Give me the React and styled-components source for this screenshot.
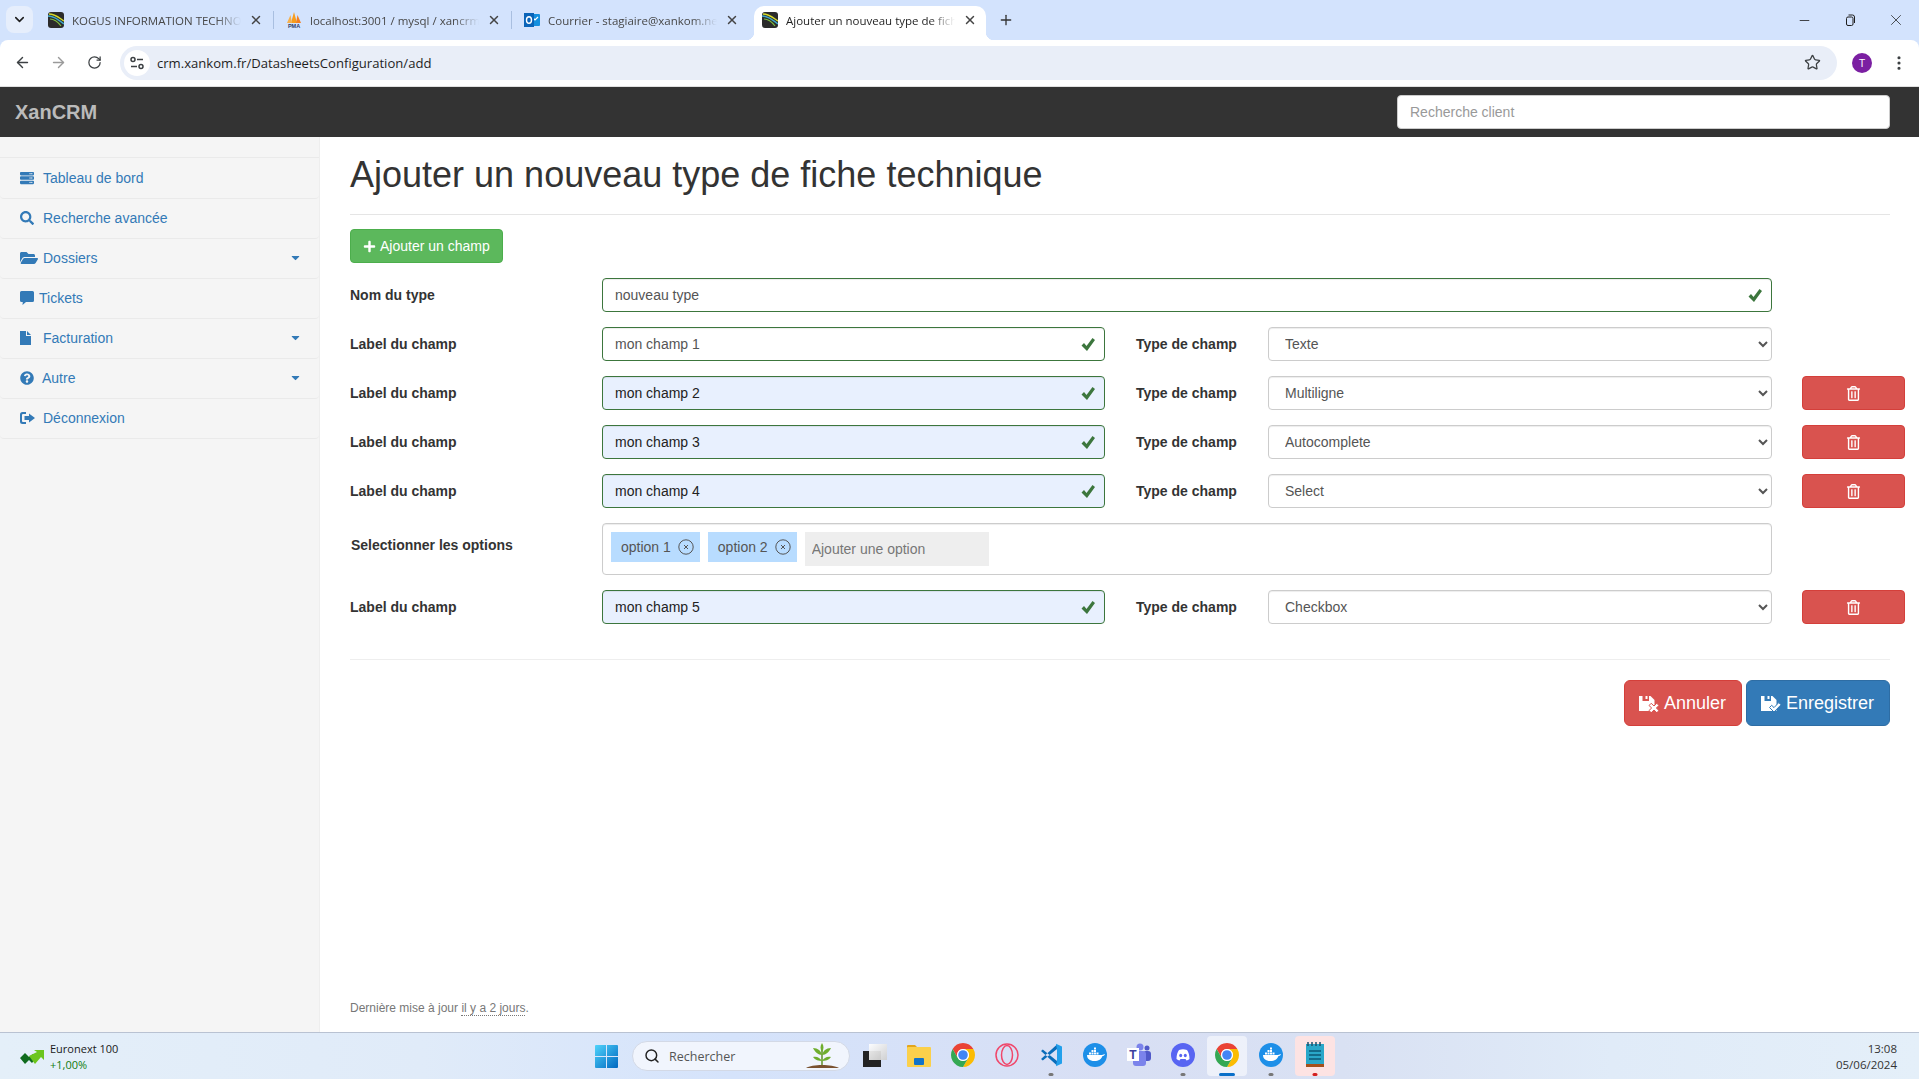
import React from 'react';
import styled, { createGlobalStyle } from 'styled-components';
import { ArrowLeft, ArrowRight, RotateCw, Star, EllipsisVertical, X, Plus, ChevronDown, Minus, Search } from 'lucide-react';
import { FaServer, FaSearch, FaFolderOpen, FaQuestionCircle, FaPlus, FaRegTrashAlt, FaCaretDown } from 'react-icons/fa';

const GlobalStyle = createGlobalStyle`
	html, body {
		margin: 0;
		height: 100%;
		overflow: hidden;
		background: #fff;
	}
	body {
		font-family: "Liberation Sans", Arial, sans-serif;
		font-size: 14px;
		color: #333;
	}
	#root {
		height: 100%;
	}
	* {
		box-sizing: border-box;
	}
`;

const UI_FONT = '"Open Sans", "Noto Sans", sans-serif';

const KogusIcon = () => (
	<svg width="16" height="16" viewBox="0 0 16 16">
		<rect width="16" height="16" rx="3" fill="#2b2b2b" />
		<path d="M0 4c5 0 9 3 16 8" stroke="#3fa9c9" strokeWidth="1.4" fill="none" />
		<path d="M1 2c6 0 9 3 15 7" stroke="#d7dc2a" strokeWidth="1.4" fill="none" />
		<path d="M2 7c5 0 8 3 11 7" stroke="#7fbf3f" strokeWidth="1.2" fill="none" />
	</svg>
);

const PmaIcon = () => (
	<svg width="16" height="16" viewBox="0 0 16 16">
		<path d="M8 0l3 11H5z" fill="#f89c1c" />
		<path d="M4.500 3L6 11H1z" fill="#f7b04a" />
		<path d="M11.500 3L15 11h-5z" fill="#f47f1f" />
		<text x="8" y="16" fontSize="5.500" fontWeight="700" textAnchor="middle" fill="#2b3a67" fontFamily="Liberation Sans">
			PMA
		</text>
	</svg>
);

const OutlookIcon = () => (
	<svg width="16" height="16" viewBox="0 0 16 16">
		<rect x="6" y="2" width="10" height="12" rx="1" fill="#1490df" />
		<path d="M9 6l2 2 3-3" stroke="#fff" strokeWidth="1.200" fill="none" />
		<rect x="0" y="1" width="10" height="14" fill="#0a64b8" />
		<ellipse cx="5" cy="8" rx="2.500" ry="3.300" fill="none" stroke="#fff" strokeWidth="1.400" />
	</svg>
);

const TuneIcon = () => (
	<svg width="16" height="16" viewBox="0 0 16 16" fill="none" stroke="#3c4043" strokeWidth="1.500">
		<circle cx="4" cy="4.500" r="2" />
		<path d="M8 4.500h6M2 11.500h6" />
		<circle cx="12" cy="11.500" r="2" />
	</svg>
);

const RestoreIcon = () => (
	<svg width="12" height="12" viewBox="0 0 12 12" fill="none" stroke="#1f1f1f" strokeWidth="1">
		<rect x="2.500" y="3" width="6.500" height="8.500" rx="1.500" />
		<path d="M4.500 1h4a2 2 0 0 1 2 2v6" />
	</svg>
);

const CheckGlyph = () => (
	<svg width="14" height="13" viewBox="0 0 14 13" fill="#3c763d">
		<path d="M0.500 7.500L3 5l2.500 3L11.500 0 14 2 6 13z" />
	</svg>
);

const FloppyIcon = ({ cancel }) => (
	<svg width="20" height="17" viewBox="0 0 20 17">
		<path d="M0 1h3.500v5h6.500V1h1.500l4 4v11H0z" fill="#fff" />
		<rect x="6.500" y="1" width="2" height="3" fill="#fff" />
		{cancel ? (
			<path
				d="M10 10.500l2.200-2.200 2.800 2.700 2.800-2.700 2.200 2.200-2.700 2.500 2.700 2.500-2.200 2.200-2.800-2.700-2.800 2.700-2.200-2.200 2.700-2.500z"
				fill="#fff"
				stroke="#d9534f"
				strokeWidth="1"
			/>
		) : (
			<path d="M8.500 12.500l2.200-2.200 2.300 2.300 4.800-5 2.200 2.200-7 7.200z" fill="#fff" stroke="#337ab7" strokeWidth="1" />
		)}
	</svg>
);

const SignOutIcon = () => (
	<svg width="15" height="14" viewBox="0 0 15 14" fill="#337ab7">
		<path d="M6 1H2.500A2.500 2.500 0 0 0 0 3.500v7A2.500 2.500 0 0 0 2.500 13H6v-2H3a1 1 0 0 1-1-1V4a1 1 0 0 1 1-1h3z" />
		<path d="M9 2.500L15 7l-6 4.500V9H4.500V5H9z" />
	</svg>
);

const CommentGlyph = () => (
	<svg width="14" height="14" viewBox="0 0 14 14" fill="#337ab7">
		<path d="M1.500 0h11A1.500 1.500 0 0 1 14 1.500v8a1.500 1.500 0 0 1-1.500 1.500H6L2.500 14l.300-3H1.500A1.500 1.500 0 0 1 0 9.500v-8A1.500 1.500 0 0 1 1.500 0z" />
	</svg>
);

const FileGlyph = () => (
	<svg width="11" height="14" viewBox="0 0 11 14" fill="#337ab7">
		<path d="M0 0h6v5h5v9H0zM7 0l4 4H7z" />
	</svg>
);

const TagCloseIcon = () => (
	<svg width="16" height="16" viewBox="0 0 16 16" fill="none" stroke="#555">
		<circle cx="8" cy="8" r="7.200" />
		<path d="M6 6l4 4M10 6l-4 4" />
	</svg>
);

const TrendIcon = () => (
	<svg width="24" height="16" viewBox="0 0 24 16">
		<path d="M0 10l5-5 4 4 4-3 3 4-4 5-3-3-4 4z" fill="#0f6b1e" />
		<path d="M9 8l8-4-3-2h10v10l-3-3-6 7-3-4z" fill="#6cc51d" />
	</svg>
);

const WindowsIcon = () => (
	<svg width="23" height="23" viewBox="0 0 23 23">
		<defs>
			<linearGradient id="win" x1="0" y1="0" x2="1" y2="1">
				<stop offset="0" stopColor="#4fd3fb" />
				<stop offset="1" stopColor="#0067c0" />
			</linearGradient>
		</defs>
		<path d="M0 1a1 1 0 0 1 1-1h10v11H0zM12 0h10a1 1 0 0 1 1 1v10H12zM0 12h11v11H1a1 1 0 0 1-1-1zM12 12h11v10a1 1 0 0 1-1 1H12z" fill="url(#win)" />
	</svg>
);

const PlantIcon = () => (
	<svg width="36" height="26" viewBox="0 0 36 26">
		<path d="M2 25c6-4 26-4 33 0z" fill="#7a5230" />
		<path d="M18 22V7" stroke="#5f8f2a" strokeWidth="1.500" />
		<path d="M18 12C14 12 11 9 9 5c5 0 8 3 9 7zM18 12c4 0 7-3 9-7-5 0-8 3-9 7zM18 9c-2-3-2-6 0-9 2 3 2 6 0 9zM18 18c-3 0-7-1-9-4 4-1 7 1 9 4zM18 18c3 0 7-1 9-4-4-1-7 1-9 4z" fill="#6fae2e" />
	</svg>
);

const TaskViewIcon = () => (
	<svg width="24" height="23" viewBox="0 0 24 23">
		<defs>
			<linearGradient id="tvw" x1="0" y1="0" x2="1" y2="1">
				<stop offset="0" stopColor="#fff" />
				<stop offset="1" stopColor="#cfcfcf" />
			</linearGradient>
		</defs>
		<rect x="0" y="7" width="18" height="16" fill="#232323" />
		<rect x="6" y="0" width="18" height="16" fill="url(#tvw)" opacity="0.93" />
	</svg>
);

const FolderIcon = () => (
	<svg width="24" height="23" viewBox="0 0 24 23">
		<path d="M0 2a1 1 0 0 1 1-1h7l3 3H0z" fill="#e3a51c" />
		<rect y="3" width="24" height="20" rx="1" fill="#fbd04b" />
		<rect x="7" y="14" width="10" height="7" rx="1" fill="#1173c9" />
	</svg>
);

const ChromeIcon = () => (
	<svg width="24" height="24" viewBox="0 0 24 24">
		<path d="M12 0a12 12 0 0 1 10.390 6H12a6 6 0 0 0-5.200 9L1.610 6A12 12 0 0 1 12 0z" fill="#ea4335" />
		<path d="M22.390 6A12 12 0 0 1 12 24l5.200-9A6 6 0 0 0 12 6z" fill="#fbbc04" />
		<path d="M12 24A12 12 0 0 1 1.610 6l5.190 9a6 6 0 0 0 10.400 0z" fill="#34a853" />
		<circle cx="12" cy="12" r="6" fill="#fff" />
		<circle cx="12" cy="12" r="4.800" fill="#4285f4" />
	</svg>
);

const OperaIcon = () => (
	<svg width="24" height="24" viewBox="0 0 24 24" fill="none" stroke="#f0476b">
		<circle cx="12" cy="12" r="11" strokeWidth="1.500" />
		<ellipse cx="12" cy="12" rx="5.500" ry="9.500" strokeWidth="1.500" />
	</svg>
);

const VsCodeIcon = () => (
	<svg width="24" height="24" viewBox="0 0 24 24">
		<path d="M2 8l1.800-1.500L18 18v4.500zM2 16l1.800 1.500L18 6V1.500z" fill="#0a6dba" />
		<path d="M17 .8l6 2.800v16.800l-6 2.800 1-6V7z" fill="#22a0ec" />
	</svg>
);

const DockerIcon = () => (
	<svg width="24" height="24" viewBox="0 0 24 24">
		<circle cx="12" cy="12" r="12" fill="#1d8fe8" />
		<path d="M4 12h15c1 0 2-1 3-1-.500 1.500-1.500 2-2.500 2-1 3-4 5-8 5-5 0-7.500-2.500-7.500-6z" fill="#fff" />
		<path d="M6 9.500h2v2H6zM8.500 9.500h2v2h-2zM11 9.500h2v2h-2zM8.500 7h2v2h-2zM11 7h2v2h-2zM13.500 9.500h2v2h-2zM11 4.500h2v2h-2z" fill="#fff" />
	</svg>
);

const TeamsIcon = () => (
	<svg width="24" height="24" viewBox="0 0 24 24">
		<circle cx="20" cy="5" r="2.500" fill="#5059c9" />
		<circle cx="13" cy="4" r="3.500" fill="#7b83eb" />
		<rect x="16" y="8" width="8" height="10" rx="3" fill="#5059c9" />
		<rect x="6" y="8" width="13" height="15" rx="3" fill="#7b83eb" />
		<rect x="0" y="5" width="12" height="13" fill="#fff" />
		<text x="6" y="16" fontSize="12" fontWeight="700" textAnchor="middle" fill="#3b3f9e" fontFamily="Liberation Sans">
			T
		</text>
	</svg>
);

const DiscordIcon = () => (
	<svg width="24" height="24" viewBox="0 0 24 24">
		<circle cx="12" cy="12" r="12" fill="#5865f2" />
		<path d="M8 7c3-1 5-1 8 0 1.500 2 2.500 5 2.500 9-1 .8-2 1.200-3 1.500L14.500 16h-5l-1 1.500c-1-.300-2-.700-3-1.500 0-4 1-7 2.500-9z" fill="#fff" />
		<ellipse cx="9.700" cy="12.500" rx="1.500" ry="1.700" fill="#5865f2" />
		<ellipse cx="14.300" cy="12.500" rx="1.500" ry="1.700" fill="#5865f2" />
	</svg>
);

const NotesIcon = () => (
	<svg width="20" height="26" viewBox="0 0 20 26">
		<rect x="1" y="2" width="18" height="20" fill="#2aa7c9" />
		<path d="M3 0v4M7 0v4M11 0v4M15 0v4" stroke="#1d4f6b" strokeWidth="1.500" />
		<rect x="4" y="8" width="12" height="2" fill="#136b8a" />
		<rect x="4" y="12" width="12" height="2" fill="#136b8a" />
		<rect x="4" y="16" width="12" height="2" fill="#136b8a" />
		<rect x="1" y="22" width="18" height="3" fill="#a5501c" />
	</svg>
);

const TABS = [
	{ title: 'KOGUS INFORMATION TECHNOLOGY', icon: <KogusIcon />, sep: true },
	{ title: 'localhost:3001 / mysql / xancrm', icon: <PmaIcon />, sep: true },
	{ title: 'Courrier - stagiaire@xankom.net', icon: <OutlookIcon /> },
	{ title: 'Ajouter un nouveau type de fiche technique', icon: <KogusIcon />, active: true },
];

const MENU = [
	{ label: 'Tableau de bord', icon: <FaServer size={14} /> },
	{ label: 'Recherche avancée', icon: <FaSearch size={14} /> },
	{ label: 'Dossiers', icon: <FaFolderOpen size={18} />, caret: true },
	{ label: 'Tickets', icon: <CommentGlyph />, slot: 19 },
	{ label: 'Facturation', icon: <FileGlyph />, caret: true },
	{ label: 'Autre', icon: <FaQuestionCircle size={14} />, caret: true, slot: 22 },
	{ label: 'Déconnexion', icon: <SignOutIcon /> },
];

const TASK_APPS = [
	{ key: 'view', icon: <TaskViewIcon /> },
	{ key: 'files', icon: <FolderIcon /> },
	{ key: 'chrome1', icon: <ChromeIcon /> },
	{ key: 'opera', icon: <OperaIcon /> },
	{ key: 'code', icon: <VsCodeIcon />, mark: 'dot' },
	{ key: 'docker1', icon: <DockerIcon /> },
	{ key: 'teams', icon: <TeamsIcon /> },
	{ key: 'discord', icon: <DiscordIcon />, mark: 'dot' },
	{ key: 'chrome2', icon: <ChromeIcon />, mark: 'bar', tint: 'rgba(255,255,255,.55)' },
	{ key: 'docker2', icon: <DockerIcon />, mark: 'dot' },
	{ key: 'notes', icon: <NotesIcon />, mark: 'red', tint: '#fde3e3' },
];

const FieldInput = ({ value, filled }) => (
	<InputWrap>
		<ValidInput defaultValue={value} $filled={filled} />
		<ValidIcon>
			<CheckGlyph />
		</ValidIcon>
	</InputWrap>
);

const FieldRow = ({ value, filled, type, removable }) => (
	<FormRow>
		<FieldLabel>Label du champ</FieldLabel>
		<FieldInput value={value} filled={filled} />
		<TypeLabel>Type de champ</TypeLabel>
		<TypeSelect defaultValue={type}>
			<option>Texte</option>
			<option>Multiligne</option>
			<option>Autocomplete</option>
			<option>Select</option>
			<option>Checkbox</option>
		</TypeSelect>
		{removable && (
			<DeleteButton>
				<FaRegTrashAlt size={15} />
			</DeleteButton>
		)}
	</FormRow>
);

const App = () => (
	<Page>
		<GlobalStyle />
		<TabStrip>
			<TabSearch>
				<ChevronDown size={15} strokeWidth={2.5} />
			</TabSearch>
			{TABS.map(tab => (
				<Tab key={tab.title} $active={tab.active} $sep={tab.sep}>
					<TabIcon>{tab.icon}</TabIcon>
					<TabTitle $active={tab.active}>{tab.title}</TabTitle>
					<X size={14} strokeWidth={2.5} color="#444" />
				</Tab>
			))}
			<NewTab>
				<Plus size={16} strokeWidth={2} />
			</NewTab>
			<WindowControls>
				<WindowButton>
					<Minus size={15} strokeWidth={1.3} />
				</WindowButton>
				<WindowButton>
					<RestoreIcon />
				</WindowButton>
				<WindowButton>
					<X size={18} strokeWidth={1} />
				</WindowButton>
			</WindowControls>
		</TabStrip>
		<Toolbar>
			<NavButton>
				<ArrowLeft size={17} strokeWidth={2} />
			</NavButton>
			<NavButton $disabled>
				<ArrowRight size={17} strokeWidth={2} />
			</NavButton>
			<NavButton>
				<RotateCw size={15} strokeWidth={2} />
			</NavButton>
			<Omnibox>
				<TuneBadge>
					<TuneIcon />
				</TuneBadge>
				<Url>crm.xankom.fr/DatasheetsConfiguration/add</Url>
				<Star size={17} strokeWidth={1.8} color="#3c4043" />
			</Omnibox>
			<Avatar>T</Avatar>
			<MenuDots>
				<EllipsisVertical size={18} strokeWidth={2.2} color="#3c4043" />
			</MenuDots>
		</Toolbar>
		<Navbar>
			<Brand>XanCRM</Brand>
			<ClientSearch placeholder="Recherche client" />
		</Navbar>
		<Body>
			<Sidebar>
				<MenuList>
					{MENU.map(item => (
						<MenuItem key={item.label}>
							<MenuIcon $slot={item.slot}>{item.icon}</MenuIcon>
							{item.label}
							{item.caret && (
								<Caret>
									<FaCaretDown size={13} />
								</Caret>
							)}
						</MenuItem>
					))}
				</MenuList>
			</Sidebar>
			<Main>
				<Title>Ajouter un nouveau type de fiche technique</Title>
				<AddButton>
					<FaPlus size={13} />
					Ajouter un champ
				</AddButton>
				<FormRow>
					<FieldLabel>Nom du type</FieldLabel>
					<WideField>
						<FieldInput value="nouveau type" />
					</WideField>
				</FormRow>
				<FieldRow value="mon champ 1" type="Texte" />
				<FieldRow value="mon champ 2" type="Multiligne" filled removable />
				<FieldRow value="mon champ 3" type="Autocomplete" filled removable />
				<FieldRow value="mon champ 4" type="Select" filled removable />
				<FormRow>
					<FieldLabel $top>Selectionner les options</FieldLabel>
					<TagBox>
						<Tag>
							option 1
							<TagCloseIcon />
						</Tag>
						<Tag>
							option 2
							<TagCloseIcon />
						</Tag>
						<TagInput placeholder="Ajouter une option" />
					</TagBox>
				</FormRow>
				<FieldRow value="mon champ 5" type="Checkbox" filled removable />
				<Divider />
				<Actions>
					<LargeButton $color="#d9534f" $border="#d43f3a">
						<FloppyIcon cancel />
						Annuler
					</LargeButton>
					<LargeButton $color="#337ab7" $border="#2e6da4">
						<FloppyIcon />
						Enregistrer
					</LargeButton>
				</Actions>
				<Footnote>
					Dernière mise à jour <Ago>il y a 2 jours</Ago>.
				</Footnote>
			</Main>
		</Body>
		<Taskbar>
			<Widget>
				<TrendIcon />
				<WidgetText>
					<span>Euronext 100</span>
					<WidgetValue>+1,00%</WidgetValue>
				</WidgetText>
			</Widget>
			<StartButton>
				<WindowsIcon />
			</StartButton>
			<TaskSearch>
				<Search size={16} strokeWidth={2.2} color="#222" />
				<TaskSearchText>Rechercher</TaskSearchText>
				<PlantIcon />
			</TaskSearch>
			{TASK_APPS.map(app => (
				<TaskApp key={app.key} $tint={app.tint} $mark={app.mark}>
					{app.icon}
				</TaskApp>
			))}
			<Clock>
				<span>13:08</span>
				<span>05/06/2024</span>
			</Clock>
		</Taskbar>
	</Page>
);

const Page = styled.div`
	height: 100%;
	display: flex;
	flex-direction: column;
	background: #d3e3fd;
`;

const TabStrip = styled.div`
	height: 40px;
	flex: none;
	display: flex;
	align-items: flex-end;
	padding-left: 6px;
	background: #d3e3fd;
	font-family: ${UI_FONT};
`;
const TabSearch = styled.div`
	width: 27px;
	height: 27px;
	margin: 0 3px 7px 0;
	display: flex;
	align-items: center;
	justify-content: center;
	border-radius: 8px;
	background: #e6eefc;
	color: #1f1f1f;
`;
const Tab = styled.div`
	position: relative;
	height: 34px;
	display: flex;
	align-items: center;
	padding-bottom: 6px;
	width: ${props => (props.$active ? '232px' : '238px')};
	margin-left: ${props => (props.$active ? '4px' : '0')};
	padding-left: ${props => (props.$active ? '8px' : '12px')};
	padding-right: ${props => (props.$active ? '9px' : '11px')};
	border-radius: 10px 10px 0 0;
	background: ${props => (props.$active ? '#fff' : 'transparent')};

	&::before {
		content: '';
		display: ${props => (props.$sep ? 'block' : 'none')};
		position: absolute;
		right: 0;
		top: 5px;
		width: 1px;
		height: 18px;
		background: #a9bfe0;
	}
	&::after {
		content: '';
		display: ${props => (props.$active ? 'block' : 'none')};
		position: absolute;
		left: -8px;
		right: -8px;
		bottom: 0;
		height: 8px;
		background:
			radial-gradient(circle at 0 0, transparent 8px, #fff 8.5px) left bottom / 8px 8px no-repeat,
			radial-gradient(circle at 100% 0, transparent 8px, #fff 8.5px) right bottom / 8px 8px no-repeat;
	}
`;
const TabIcon = styled.span`
	width: 16px;
	height: 16px;
	flex: none;
	margin-right: 8px;
	display: flex;
`;
const TabTitle = styled.span`
	flex: 1;
	min-width: 0;
	margin-right: 8px;
	overflow: hidden;
	white-space: nowrap;
	font-size: 11.5px;
	color: ${props => (props.$active ? '#1f1f1f' : '#474747')};
	mask-image: linear-gradient(90deg, #000 85%, transparent 100%);
`;
const NewTab = styled.div`
	width: 28px;
	height: 28px;
	margin: 0 0 6px 6px;
	display: flex;
	align-items: center;
	justify-content: center;
	color: #333;
`;
const WindowControls = styled.div`
	margin-left: auto;
	height: 40px;
	display: flex;
	align-items: center;
`;
const WindowButton = styled.div`
	width: 46px;
	display: flex;
	justify-content: center;
	color: #1f1f1f;
`;

const Toolbar = styled.div`
	height: 47px;
	flex: none;
	display: flex;
	align-items: center;
	padding: 0 0 1px 4px;
	background: #fff;
	border-radius: 8px 8px 0 0;
	border-bottom: 1px solid #e0e0e0;
	font-family: ${UI_FONT};
`;
const NavButton = styled.div`
	width: 36px;
	display: flex;
	justify-content: center;
	color: ${props => (props.$disabled ? '#9a9a9a' : '#3c4043')};
`;
const Omnibox = styled.div`
	width: 1717px;
	height: 34px;
	margin-left: 8px;
	display: flex;
	align-items: center;
	padding: 0 16px 0 4px;
	border-radius: 17px;
	background: #e9eef8;
`;
const TuneBadge = styled.div`
	width: 26px;
	height: 26px;
	display: flex;
	align-items: center;
	justify-content: center;
	border-radius: 50%;
	background: #fff;
`;
const Url = styled.div`
	flex: 1;
	margin-left: 7px;
	padding-top: 1px;
	font-size: 13.1px;
	color: #1f1f1f;
`;
const Avatar = styled.div`
	width: 20px;
	height: 20px;
	margin-left: 15px;
	border-radius: 50%;
	background: #7b1fa2;
	color: #fff;
	font-size: 11px;
	line-height: 20px;
	text-align: center;
`;
const MenuDots = styled.div`
	margin-left: 18px;
	display: flex;
`;

const Navbar = styled.div`
	height: 50px;
	flex: none;
	display: flex;
	align-items: center;
	justify-content: space-between;
	padding: 0 29px 0 15px;
	background: #333;
`;
const Brand = styled.div`
	font-size: 20px;
	font-weight: bold;
	color: #bbb;
`;
const ClientSearch = styled.input`
	width: 493px;
	height: 34px;
	padding: 6px 12px;
	border: 1px solid #ccc;
	border-radius: 4px;
	background: #fff;
	font: 14px "Liberation Sans", Arial, sans-serif;
	&::placeholder {
		color: #999;
	}
`;

const Body = styled.div`
	flex: 1;
	min-height: 0;
	display: flex;
	background: #fff;
`;
const Sidebar = styled.div`
	width: 320px;
	flex: none;
	padding-top: 20px;
	background: #f5f5f5;
	border-right: 1px solid #eee;
`;
const MenuList = styled.div`
	padding-top: 1px;
	border-top: 1px solid #eaeaea;
`;
const MenuItem = styled.div`
	height: 40px;
	display: flex;
	align-items: center;
	padding: 0 17px 2px 20px;
	border-bottom: 1px solid #eaeaea;
	border-radius: 0 0 4px 4px;
	color: #337ab7;
`;
const MenuIcon = styled.span`
	width: ${props => props.$slot || 23}px;
	height: 18px;
	flex: none;
	display: flex;
	align-items: center;
`;
const Caret = styled.span`
	margin-left: auto;
	display: flex;
`;

const Main = styled.div`
	flex: 1;
	min-width: 0;
	display: flex;
	flex-direction: column;
	padding: 0 29px 15px 30px;
`;
const Title = styled.h1`
	margin: 0 0 14px;
	height: 78px;
	padding-top: 18px;
	border-bottom: 1px solid #e5e5e5;
	font-size: 36px;
	font-weight: 500;
	line-height: 40px;
	color: #333;
`;
const AddButton = styled.button`
	align-self: flex-start;
	width: 153px;
	height: 34px;
	margin-bottom: 15px;
	padding: 0 12px;
	display: flex;
	align-items: center;
	gap: 4px;
	border: 1px solid #4cae4c;
	border-radius: 4px;
	background: #5cb85c;
	color: #fff;
	font: 14px "Liberation Sans", Arial, sans-serif;
`;
const FormRow = styled.div`
	width: 1555px;
	margin-bottom: 15px;
	display: grid;
	grid-template-columns: 252px 503px 31px 132px 504px 30px 103px;
	align-items: center;
`;
const FieldLabel = styled.label`
	font-weight: bold;
	align-self: ${props => (props.$top ? 'start' : 'center')};
	padding-top: ${props => (props.$top ? '14px' : '0')};
	padding-left: ${props => (props.$top ? '1px' : '0')};
`;
const TypeLabel = styled.label`
	grid-column: 4;
	font-weight: bold;
`;
const WideField = styled.div`
	grid-column: 2 / 6;
`;
const InputWrap = styled.div`
	position: relative;
`;
const ValidInput = styled.input`
	display: block;
	width: 100%;
	height: 34px;
	padding: 6px 34px 6px 12px;
	border: 1px solid #3c763d;
	border-radius: 4px;
	background: ${props => (props.$filled ? '#e8f0fe' : '#fff')};
	color: ${props => (props.$filled ? '#222' : '#555')};
	font: 14px "Liberation Sans", Arial, sans-serif;
	box-shadow: inset 0 1px 1px rgba(0, 0, 0, 0.075);
`;
const ValidIcon = styled.span`
	position: absolute;
	right: 10px;
	top: 11px;
	display: flex;
`;
const TypeSelect = styled.select`
	grid-column: 5;
	height: 34px;
	padding: 6px 12px;
	border: 1px solid #ccc;
	border-radius: 4px;
	background: #fff;
	color: #555;
	font: 14px "Liberation Sans", Arial, sans-serif;
	box-shadow: inset 0 1px 1px rgba(0, 0, 0, 0.075);
`;
const DeleteButton = styled.button`
	grid-column: 7;
	height: 34px;
	display: flex;
	align-items: center;
	justify-content: center;
	border: 1px solid #d43f3a;
	border-radius: 4px;
	background: #d9534f;
	color: #fff;
`;
const TagBox = styled.div`
	grid-column: 2 / 6;
	height: 52px;
	padding: 8px;
	display: flex;
	align-items: flex-start;
	gap: 8px;
	border: 1px solid #ccc;
	border-radius: 4px;
	background: #fff;
	box-shadow: inset 0 1px 1px rgba(0, 0, 0, 0.075);
`;
const Tag = styled.div`
	height: 30px;
	padding: 0 6px 0 10px;
	display: flex;
	align-items: center;
	gap: 7px;
	background: #b8dcff;
	color: #555;
`;
const TagInput = styled.input`
	width: 184px;
	height: 34px;
	padding: 0 7px;
	border: 0;
	background: #eee;
	font: 14px "Liberation Sans", Arial, sans-serif;
	&::placeholder {
		color: #777;
	}
`;
const Divider = styled.div`
	margin-top: 20px;
	border-top: 1px solid #eee;
`;
const Actions = styled.div`
	margin-top: 20px;
	display: flex;
	justify-content: flex-end;
	gap: 4px;
`;
const LargeButton = styled.button`
	height: 46px;
	padding: 0 15px 0 14px;
	display: flex;
	align-items: center;
	gap: 5px;
	border: 1px solid ${props => props.$border};
	border-radius: 6px;
	background: ${props => props.$color};
	color: #fff;
	font: 18px "Liberation Sans", Arial, sans-serif;
`;
const Footnote = styled.div`
	margin-top: auto;
	font-size: 12px;
	line-height: 17px;
	color: #777;
`;
const Ago = styled.span`
	border-bottom: 1px dotted #777;
`;

const Taskbar = styled.div`
	height: 47px;
	flex: none;
	display: flex;
	align-items: center;
	padding-left: 20px;
	border-top: 1px solid #b9c2d2;
	background: linear-gradient(90deg, #e4eff9 0%, #e0ebf9 22%, #d5e3fb 38%, #d8dff4 58%, #d9e1f3 70%, #e0ebf8 84%, #e4eff9 100%);
	font-family: ${UI_FONT};
`;
const Widget = styled.div`
	width: 575px;
	display: flex;
	align-items: center;
	gap: 6px;
`;
const WidgetText = styled.div`
	display: flex;
	flex-direction: column;
	gap: 1px;
	font-size: 11px;
	line-height: 15px;
	color: #1a1a1a;
`;
const WidgetValue = styled.span`
	color: #107c10;
`;
const StartButton = styled.div`
	margin-right: 14px;
	display: flex;
`;
const TaskSearch = styled.div`
	width: 218px;
	height: 30px;
	margin-right: 3px;
	padding: 0 9px 0 11px;
	display: flex;
	align-items: center;
	border-radius: 15px;
	border: 1px solid #d3d9e6;
	background: #f1f5fd;
`;
const TaskSearchText = styled.span`
	flex: 1;
	margin-left: 9px;
	font-size: 12.500px;
	color: #555;
`;
const TaskApp = styled.div`
	position: relative;
	width: 40px;
	height: 40px;
	margin: 0 2px;
	display: flex;
	align-items: center;
	justify-content: center;
	padding-bottom: 2px;
	border-radius: 4px;
	background: ${props => props.$tint || 'transparent'};

	&::after {
		content: '';
		display: ${props => (props.$mark ? 'block' : 'none')};
		position: absolute;
		left: 50%;
		bottom: 0;
		width: ${props => (props.$mark === 'bar' ? '16px' : '5px')};
		height: 3px;
		transform: translateX(-50%);
		border-radius: 2px;
		background: ${props => (props.$mark === 'bar' ? '#0a6fc9' : props.$mark === 'red' ? '#d32020' : '#777')};
	}
`;
const Clock = styled.div`
	margin-left: auto;
	padding-right: 22px;
	display: flex;
	flex-direction: column;
	align-items: flex-end;
	gap: 1px;
	font-size: 11.500px;
	line-height: 15px;
	color: #333;
`;

export default App;
